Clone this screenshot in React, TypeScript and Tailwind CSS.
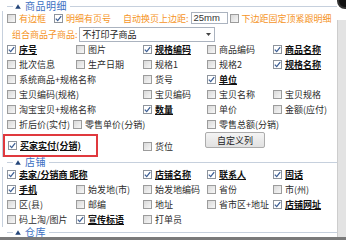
import type { ReactNode } from 'react';

type Tone = 'normal' | 'orange';

function Box({ checked }: { checked?: boolean }) {
  if (checked) {
    return (
      <span className="w-[9px] h-[9px] border border-[#8e949c] bg-white flex items-center justify-center shrink-0">
        <svg width="7" height="7" viewBox="0 0 7 7">
          <path d="M0.8 3.6 L2.7 5.6 L6.2 1.2" stroke="#3d5f95" strokeWidth="1.3" fill="none" />
        </svg>
      </span>
    );
  }
  return <span className="w-[9px] h-[9px] border border-[#9c9c9c] bg-linear-to-br from-[#d9d9d9] to-[#f7f7f7] shrink-0" />;
}

function Check({ label, checked, tone = 'normal', className = '' }: { label: string; checked?: boolean; tone?: Tone; className?: string }) {
  const text =
    tone === 'orange'
      ? 'text-[#f5941f]'
      : checked
        ? 'font-bold underline underline-offset-[1px] text-[#111]'
        : 'text-[#2c2c2c]';
  return (
    <div className={`flex items-center gap-[3px] whitespace-nowrap ${className}`}>
      <Box checked={checked} />
      <span className={`leading-none ${text}`}>{label}</span>
    </div>
  );
}

function Triangle() {
  return (
    <svg width="6" height="5" viewBox="0 0 6 5" className="shrink-0">
      <path d="M3 0.3 L5.8 4.7 L0.2 4.7 Z" fill="#24467a" />
    </svg>
  );
}

function Header({ title, h }: { title: string; h: string }) {
  return (
    <div className={`flex items-center pl-[7px] ${h}`}>
      <span className="w-[6px] h-px bg-[#c6d0dd]" />
      <span className="ml-[2px]"><Triangle /></span>
      <span className="ml-[4px] text-[10px] leading-none tracking-[0.5px] text-[#3b6fc2]">{title}</span>
      <span className="ml-[3px] flex-1 h-px bg-[#c6d0dd]" />
    </div>
  );
}

function Row({ children, className = '' }: { children: ReactNode; className?: string }) {
  return <div className={`grid grid-cols-[69px_67px_64px_66px_1fr] pl-[4px] items-center ${className}`}>{children}</div>;
}

export default function App() {
  return (
    <div className="w-[346px] h-[240px] overflow-hidden bg-white flex flex-col relative font-['Noto_Sans_CJK_SC','Noto_Sans',sans-serif] text-[9px]">
      <div className="flex h-[237px]">
        <div className="w-[337px] flex flex-col overflow-hidden">
          <div className="pt-[1px]">
            <Header title="商品明细" h="h-[10px]" />
          </div>
          <div className="ml-[2px] border-l border-[#c6d0dd] flex flex-col">
            <div className="flex items-center h-[14px] pl-[4px]">
              <Check label="有边框" tone="orange" />
              <Check className="ml-[8px]" label="明细有页号" checked tone="orange" />
              <span className="ml-[12px] leading-none text-[#f5941f] whitespace-nowrap">自动换页上边距:</span>
              <div className="ml-[2px] w-[37px] h-[12px] border border-[#abb3bf] flex items-center pl-[2px] text-[#333] text-[9.5px] font-['Liberation_Sans',sans-serif]">
                25mm
              </div>
              <Check className="ml-[2px]" label="下边距固定顶紧跟明细" tone="orange" />
            </div>
            <div className="flex items-center h-[17px] pt-[2px] pl-[9px]">
              <span className="leading-none text-[#f5941f] whitespace-nowrap">组合商品子商品:</span>
              <div className="ml-[1px] w-[136px] h-[15px] border border-[#abb3bf] flex items-center pl-[3px] pr-[3px] text-[#222]">
                <span className="flex-1 leading-none">不打印子商品</span>
                <svg width="5" height="3" viewBox="0 0 5 3">
                  <path d="M0 0 L5 0 L2.5 3 Z" fill="#444" />
                </svg>
              </div>
            </div>

            <Row className="grid-rows-[15px_15px_15px_15px_15px_15px]">
              <Check label="序号" checked />
              <Check label="图片" />
              <Check label="规格编码" checked />
              <Check label="商品编码" />
              <Check label="商品名称" checked />

              <Check label="批次信息" />
              <Check label="生产日期" />
              <Check label="规格1" />
              <Check label="规格2" />
              <Check label="规格名称" checked />

              <Check label="系统商品+规格名称" className="col-span-2" />
              <Check label="货号" />
              <Check label="单位" checked />
              <span />

              <Check label="宝贝编码(规格)" className="col-span-2" />
              <Check label="宝贝编码" />
              <Check label="宝贝名称" />
              <Check label="宝贝规格" />

              <Check label="淘宝宝贝+规格名称" className="col-span-2" />
              <Check label="数量" checked />
              <Check label="单价" />
              <Check label="金额(应付)" />

              <div className="col-span-3 flex items-center gap-[3px]">
                <Check label="折后价(实付)" />
                <Check label="零售单价(分销)" />
              </div>
              <Check label="零售总额(分销)" className="col-span-2" />
            </Row>

            <Row className="h-[25px] items-start">
              <div className="col-span-2 -ml-[4px] mt-[2px] w-[95px] h-[23px] border-2 border-[#e0393e] flex items-center pl-[3px]">
                <Check label="买家实付(分销)" checked />
              </div>
              <div className="pt-[8px] h-[20px] flex items-center">
                <Check label="货位" />
              </div>
              <div className="col-span-2 -ml-[2px]">
                <button className="w-[60px] h-[16px] border border-[#acacac] rounded-[2px] bg-linear-to-b from-[#f4f4f4] to-[#e1e1e1] text-[#222] leading-none flex items-center justify-center">
                  自定义列
                </button>
              </div>
            </Row>
          </div>

          <Header title="店铺" h="h-[11px]" />
          <div className="ml-[2px] border-l border-[#c6d0dd] flex flex-col">
            <Row className="grid-rows-[15px_15px_15px_15px]">
              <Check label="卖家/分销商 昵称" checked className="col-span-2" />
              <Check label="店铺名称" checked />
              <Check label="联系人" checked />
              <Check label="固话" checked />

              <Check label="手机" checked />
              <Check label="始发地(市)" />
              <Check label="始发地编码" />
              <Check label="省份" />
              <Check label="市(州)" />

              <Check label="区(县)" />
              <Check label="邮编" />
              <Check label="地址" />
              <Check label="省市区+地址" />
              <Check label="店铺网址" checked />

              <Check label="码上淘/图片" />
              <Check label="宣传标语" checked />
              <Check label="打单员" />
            </Row>
          </div>

          <Header title="仓库" h="h-[12px]" />
        </div>
        <div className="flex-1 flex flex-col">
          <div className="h-[20px] bg-white" />
          <div className="flex-1 bg-[#e3e3e3] border-l border-[#cdcdcd]" />
        </div>
      </div>
      <div className="h-[3px] bg-[#7a7a7a]" />
      <div className="absolute -top-[7px] -right-[7px] w-[16px] h-[16px] rounded-full bg-[#111] border-2 border-[#333]" />
    </div>
  );
}
